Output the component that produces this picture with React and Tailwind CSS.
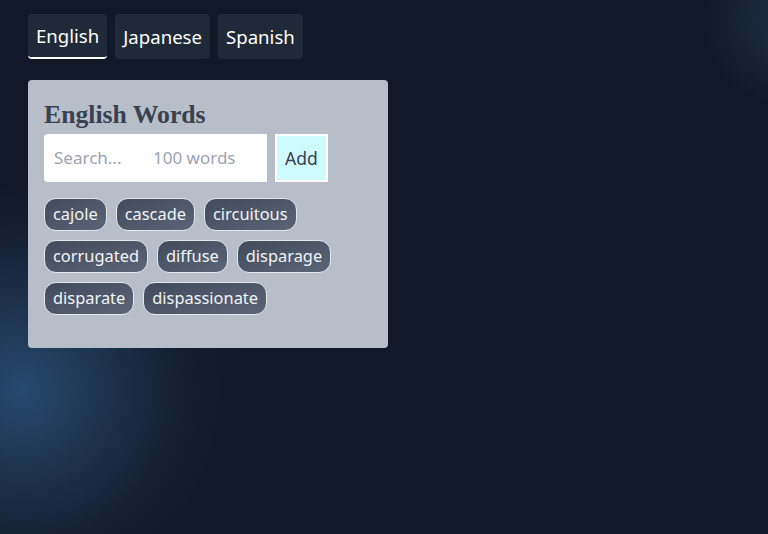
import React from "react";

const words = [
  "cajole",
  "cascade",
  "circuitous",
  "corrugated",
  "diffuse",
  "disparage",
  "disparate",
  "dispassionate",
];

export default function App() {
  return (
    <div
      className="relative min-h-[534px] w-full overflow-hidden bg-[#111827] px-[28px] pt-[14px]"
      style={{ fontFamily: '"Segoe UI", "Noto Sans", sans-serif' }}
    >
      <div className="pointer-events-none absolute left-[-198px] top-[170px] h-[440px] w-[440px] rounded-full bg-[radial-gradient(circle_closest-side,rgba(38,74,112,1)_0%,rgba(35,62,94,0.75)_35%,rgba(28,46,72,0.35)_70%,rgba(17,24,39,0)_100%)]" />
      <div className="pointer-events-none absolute right-[-110px] top-[-70px] h-[180px] w-[180px] rounded-full bg-[radial-gradient(circle,rgba(36,56,84,0.7)_0%,rgba(17,24,39,0)_70%)]" />
      <div className="relative flex gap-2">
        <button className="h-[45px] rounded border-b-2 border-white bg-[#1f2937] px-2 text-[18.6px] text-white">
          English
        </button>
        <button className="h-[45px] rounded bg-[#1f2937] px-2 text-[18.6px] text-white">
          Japanese
        </button>
        <button className="h-[45px] rounded bg-[#1f2937] px-2 text-[18.6px] text-white">
          Spanish
        </button>
      </div>
      <div className="relative mt-[21px] w-[360px] rounded bg-[#b8bec8] px-4 pb-[33px] pt-4">
        <h2
          className="text-[25.7px] font-bold leading-[38px] text-[#374151]"
          style={{ fontFamily: '"Liberation Serif", serif' }}
        >
          English Words
        </h2>
        <div className="flex items-stretch gap-2">
          <div className="flex h-[48px] w-[223px] items-center rounded-l-sm bg-white pl-[10px] text-[17px] text-[#9ca3af]">
            <span className="w-[99px]">Search...</span>
            <span>100 words</span>
          </div>
          <button className="h-[48px] border-2 border-white bg-[#cffafe] px-2 text-[17.5px] text-[#374151]">
            Add
          </button>
        </div>
        <div className="mt-4 flex flex-wrap gap-[9px]">
          {words.map((w) => (
            <span
              key={w}
              className="flex h-[33px] items-center rounded-xl border border-[#e5e7eb] bg-gradient-to-br from-[#414b5b] to-[#5b6577] px-2 text-[16.4px] text-[#f3f4f6]"
            >
              {w}
            </span>
          ))}
        </div>
      </div>
    </div>
  );
}
